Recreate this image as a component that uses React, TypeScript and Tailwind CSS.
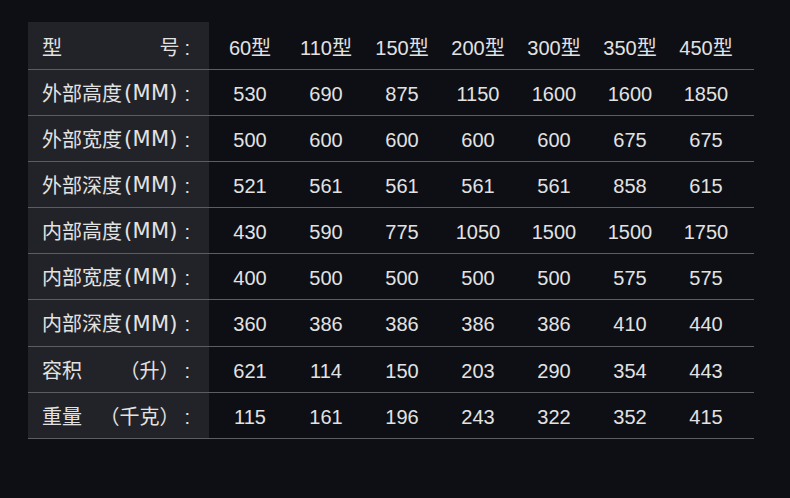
const HEADERS = ['60型', '110型', '150型', '200型', '300型', '350型', '450型']

type Label = { left: string; unit?: string; right?: string }

const ROWS: { label: Label; h: string; values: string[] }[] = [
  { label: { left: '外部高度', unit: '(MM)' }, h: 'h-[46px]', values: ['530', '690', '875', '1150', '1600', '1600', '1850'] },
  { label: { left: '外部宽度', unit: '(MM)' }, h: 'h-[46px]', values: ['500', '600', '600', '600', '600', '675', '675'] },
  { label: { left: '外部深度', unit: '(MM)' }, h: 'h-[46px]', values: ['521', '561', '561', '561', '561', '858', '615'] },
  { label: { left: '内部高度', unit: '(MM)' }, h: 'h-[46px]', values: ['430', '590', '775', '1050', '1500', '1500', '1750'] },
  { label: { left: '内部宽度', unit: '(MM)' }, h: 'h-[46px]', values: ['400', '500', '500', '500', '500', '575', '575'] },
  { label: { left: '内部深度', unit: '(MM)' }, h: 'h-[47px]', values: ['360', '386', '386', '386', '386', '410', '440'] },
  { label: { left: '容积', right: '（升）' }, h: 'h-[46px]', values: ['621', '114', '150', '203', '290', '354', '443'] },
  { label: { left: '重量', right: '（千克）' }, h: 'h-[46px]', values: ['115', '161', '196', '243', '322', '352', '415'] },
]

function Row({ label, h, cells, pt }: { label: Label; h: string; cells: string[]; pt: string }) {
  return (
    <div className={`flex ${h} border-b border-[#5c5d61]`}>
      <div className={`w-[181px] shrink-0 bg-[#222328] flex items-center justify-between pl-[14px] pr-[19px] whitespace-nowrap ${pt}`}>
        <span className="flex items-center shrink-0">
          <span>{label.left}</span>
          {label.unit && (
            <span
              className="ml-[2px] text-[21px] tracking-[0.3px]"
              style={{ fontFamily: '"DejaVu Sans", sans-serif' }}
            >
              {label.unit}
            </span>
          )}
        </span>
        <span className="flex items-center shrink-0">
          {label.right && <span>{label.right}</span>}
          <span className="ml-[5px]">:</span>
        </span>
      </div>
      <div className={`flex items-center pl-[3px] ${pt}`}>
        {cells.map((c, i) => (
          <div key={i} className="w-[76px] text-center">
            {c}
          </div>
        ))}
      </div>
    </div>
  )
}

export default function App() {
  return (
    <div
      className="w-[790px] h-[498px] bg-[#0d0f15] pl-[28px] pt-[22px] text-[20px] leading-none text-[#e2e2e2]"
      style={{ fontFamily: '"Liberation Sans", "Noto Sans CJK SC", sans-serif' }}
    >
      <div className="w-[726px]">
        <Row label={{ left: '型', right: '号' }} h="h-[48px]" cells={HEADERS} pt="pt-[4px]" />
        {ROWS.map((r) => (
          <Row key={r.label.left} label={r.label} h={r.h} cells={r.values} pt="pt-[2px]" />
        ))}
      </div>
    </div>
  )
}
